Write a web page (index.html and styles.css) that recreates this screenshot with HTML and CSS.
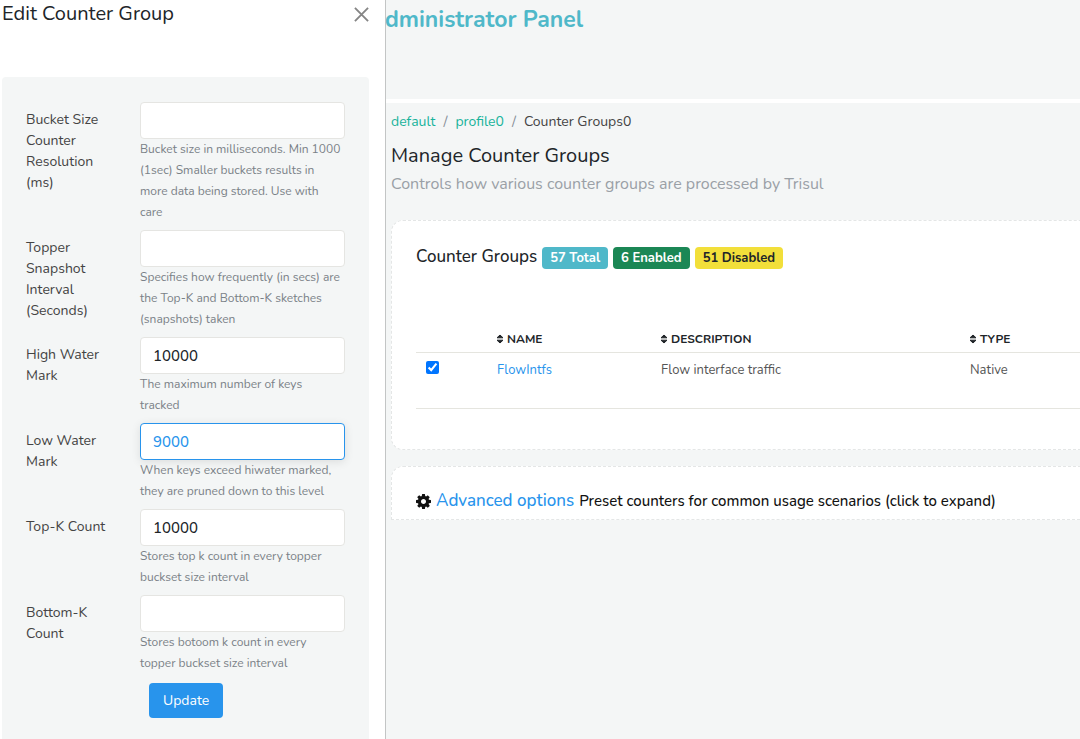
FILE: index.html
```html
<!DOCTYPE html>
<html lang="en">
<head>
<meta charset="utf-8">
<title>Edit Counter Group</title>
<link rel="stylesheet" href="styles.css">
</head>
<body>
<div class="page">
  <header class="topbar"><span class="brand">Administrator Panel</span></header>
  <main class="content">
    <nav class="breadcrumb" aria-label="Breadcrumb">
      <a href="#">default</a><span class="sep">/</span><a href="#">profile0</a><span class="sep">/</span><span>Counter Groups0</span>
    </nav>
    <h1 class="page-title">Manage Counter Groups</h1>
    <p class="subtitle">Controls how various counter groups are processed by Trisul</p>

    <section class="card">
      <div class="card-head">
        <h2 class="card-title">Counter Groups</h2>
        <span class="badge total">57 Total</span>
        <span class="badge enabled">6 Enabled</span>
        <span class="badge disabled">51 Disabled</span>
      </div>
      <table class="groups">
        <thead>
          <tr>
            <th class="col-check"></th>
            <th class="col-name"><svg class="sort" viewBox="0 0 8 10"><path d="M4 1L7 3.800H1zM4 9L1 6.200h6z"/></svg>NAME</th>
            <th class="col-desc"><svg class="sort" viewBox="0 0 8 10"><path d="M4 1L7 3.800H1zM4 9L1 6.200h6z"/></svg>DESCRIPTION</th>
            <th><svg class="sort" viewBox="0 0 8 10"><path d="M4 1L7 3.800H1zM4 9L1 6.200h6z"/></svg>TYPE</th>
          </tr>
        </thead>
        <tbody>
          <tr>
            <td><input class="check" type="checkbox" checked aria-label="Enable FlowIntfs"></td>
            <td><a href="#">FlowIntfs</a></td>
            <td>Flow interface traffic</td>
            <td>Native</td>
          </tr>
        </tbody>
      </table>
    </section>

    <section class="card advanced">
      <svg class="gear" viewBox="0 128 1536 1536"><path d="M1024 896q0-106-75-181t-181-75-181 75-75 181 75 181 181 75 181-75 75-181zm512-109v222q0 12-8 23t-20 13l-185 28q-19 54-39 91 35 50 107 138 10 12 10 25t-9 23q-27 37-99 108t-94 71q-12 0-26-9l-138-108q-44 23-91 38-16 136-29 186-7 28-36 28h-222q-14 0-24.500-8.500t-11.500-21.500l-28-184q-49-16-90-37l-141 107q-10 9-25 9-14 0-25-11-126-114-165-168-7-10-7-23 0-12 8-23 15-21 51-66.500t54-70.500q-27-50-41-99l-183-27q-13-2-21-12.500t-8-23.500v-222q0-12 8-23t19-13l186-28q14-46 39-92-40-57-107-138-10-12-10-24 0-10 9-23 26-36 98.500-107.500t94.500-71.500q13 0 26 10l138 107q44-23 91-38 16-136 29-186 7-28 36-28h222q14 0 24.500 8.500t11.500 21.500l28 184q49 16 90 37l142-107q9-9 24-9 13 0 25 10 129 119 165 170 7 8 7 22 0 12-8 23-15 21-51 66.500t-54 70.500q26 50 41 98l183 28q13 2 21 12.500t8 23.500z"/></svg>
      <a class="adv-link" href="#">Advanced options</a>
      <span class="adv-text">Preset counters for common usage scenarios (click to expand)</span>
    </section>
  </main>
</div>

<aside class="drawer">
  <div class="drawer-head">
    <h2 class="drawer-title">Edit Counter Group</h2>
    <button class="close" type="button" aria-label="Close"><svg viewBox="0 0 16 16"><path d="M1 1l14 14M15 1L1 15"/></svg></button>
  </div>
  <form class="panel">
    <div class="field">
      <label for="bucket">Bucket Size Counter Resolution (ms)</label>
      <div><input id="bucket" type="text"><small>Bucket size in milliseconds. Min 1000 (1sec) Smaller buckets results in more data being stored. Use with care</small></div>
    </div>
    <div class="field">
      <label for="topper">Topper Snapshot Interval (Seconds)</label>
      <div><input id="topper" type="text"><small>Specifies how frequently (in secs) are the Top-K and Bottom-K sketches (snapshots) taken</small></div>
    </div>
    <div class="field">
      <label for="high">High Water Mark</label>
      <div><input id="high" type="text" value="10000"><small>The maximum number of keys tracked</small></div>
    </div>
    <div class="field">
      <label for="low">Low Water Mark</label>
      <div><input id="low" class="active" type="text" value="9000"><small>When keys exceed hiwater marked, they are pruned down to this level</small></div>
    </div>
    <div class="field">
      <label for="topk">Top-K Count</label>
      <div><input id="topk" type="text" value="10000"><small>Stores top k count in every topper buckset size interval</small></div>
    </div>
    <div class="field">
      <label for="bottomk">Bottom-K Count</label>
      <div><input id="bottomk" type="text"><small>Stores botoom k count in every topper buckset size interval</small></div>
    </div>
    <button class="update" type="submit">Update</button>
  </form>
</aside>
</body>
</html>
```
FILE: styles.css
```css
* { box-sizing: border-box; }
body {
  margin: 0;
  height: 100vh;
  overflow: hidden;
  background: #f4f6f6;
  color: #212529;
  font-family: Nunito, Lato, sans-serif;
  font-size: 14px;
  line-height: 21px;
}
h1, h2, p { margin: 0; font-weight: 400; }
a { color: #2894ec; text-decoration: none; }
button, input { font-family: inherit; }

.topbar {
  height: 103px;
  padding: 5px 0 0 368px;
  border-bottom: 4px solid #fff;
}
.brand { font-size: 23px; line-height: 30px; font-weight: 700; color: #4fb8c9; }
.content { padding: 8px 0 0 391px; }
.breadcrumb { display: flex; gap: 8px; color: #444; }
.breadcrumb a { color: #18b39b; }
.sep { color: #868e96; }
.page-title { margin-top: 11px; font-size: 20px; line-height: 26px; }
.subtitle { margin-top: 3px; font-size: 16px; line-height: 24px; color: #9aa0a6; }

.card {
  margin-top: 24px;
  padding: 24px 0 40px 24px;
  background: #fff;
  border: 1px dashed #e4e6e6;
  border-right: 0;
  border-radius: 12px 0 0 12px;
}
.card-head { display: flex; align-items: center; gap: 5px; height: 24px; }
.card-title { font-size: 17px; line-height: 24px; font-weight: 500; }
.badge {
  margin-top: 2px;
  padding: 0 8px;
  border-radius: 4px;
  font-size: 13px;
  line-height: 22px;
  font-weight: 700;
  color: #fff;
}
.total { background: #4fb8c9; }
.enabled { background: #1b8755; }
.disabled { background: #f2df3a; color: #212529; }

.groups {
  width: 100%;
  margin-top: 56px;
  border-collapse: collapse;
  table-layout: fixed;
}
.groups th {
  padding: 4px 0 3px;
  font-size: 12px;
  line-height: 20px;
  text-align: left;
  border-bottom: 1px solid #e5e5df;
}
.groups td {
  height: 56px;
  padding: 7px 0 0 1px;
  vertical-align: top;
  font-size: 13px;
  color: #555;
  border-bottom: 1px solid #e5e5df;
}
.groups .col-check { width: 80px; }
.groups .col-name { width: 164px; }
.groups .col-desc { width: 309px; }
.sort {
  width: 8px;
  height: 10px;
  margin-right: 3px;
  vertical-align: -1px;
  fill: #212529;
  stroke: #212529;
  stroke-width: 1;
  stroke-linejoin: round;
}
.check { display: block; width: 13px; height: 13px; margin: 1px 0 0 9px; accent-color: #0075ff; }

.advanced {
  display: flex;
  align-items: baseline;
  gap: 5px;
  margin-top: 16px;
  padding: 21px 0 5px 24px;
  border-radius: 12px 0 0 0;
}
.gear { width: 15px; height: 15px; align-self: center; fill: #111; }
.adv-link { font-size: 17px; line-height: 26px; font-weight: 500; }
.adv-text { font-size: 15px; font-weight: 500; color: #111; }

.drawer {
  position: fixed;
  top: 0;
  left: 0;
  bottom: 0;
  width: 386px;
  overflow: hidden;
  padding: 0 16px 0 2px;
  display: flex;
  flex-direction: column;
  background: #fff;
  border-right: 1px solid #c3c5c5;
}
.drawer-head {
  display: flex;
  align-items: flex-start;
  justify-content: space-between;
  padding-bottom: 50px;
}
.drawer-title { font-size: 20px; line-height: 27px; }
.close { padding: 7px 0 0; border: 0; background: none; }
.close svg { display: block; width: 15px; height: 15px; fill: none; stroke: #858585; stroke-width: 2; }
.panel {
  flex: 1;
  padding: 25px 24px 0;
  background: #f4f6f6;
  border-radius: 4px 4px 0 0;
}
.field {
  display: grid;
  grid-template-columns: 90px 1fr;
  column-gap: 24px;
  margin-bottom: 7px;
}
.field label { padding-top: 7px; color: #444; }
.field input {
  display: block;
  width: 100%;
  height: 37px;
  padding: 0 12px;
  border: 1px solid #e5e5e2;
  border-radius: 4px;
  background: #fff;
  color: #212529;
  font-size: 15px;
  font-weight: 500;
}
.field input.active {
  border-color: #2894ec;
  color: #2894ec;
  box-shadow: 0 2px 10px rgba(0, 0, 0, .1);
}
.field small { display: block; padding-right: 4px; font-size: 12px; color: #7a8187; }
.update {
  display: block;
  margin: 9px 0 0 123px;
  padding: 0 14px;
  height: 35px;
  border: 0;
  border-radius: 4px;
  background: #2894ec;
  color: #fff;
  font-size: 14px;
}
```
